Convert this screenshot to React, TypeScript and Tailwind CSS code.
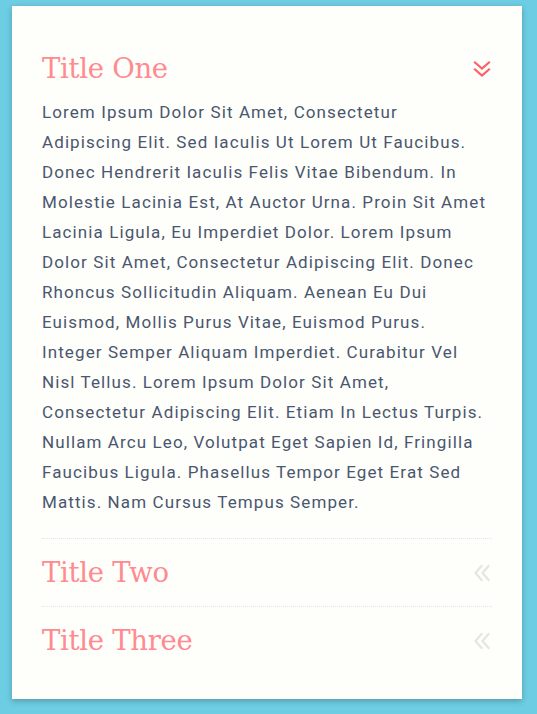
import React, { useState } from 'react';

const body =
    'Lorem Ipsum Dolor Sit Amet, Consectetur Adipiscing Elit. Sed Iaculis Ut Lorem Ut Faucibus. Donec Hendrerit Iaculis Felis Vitae Bibendum. In Molestie Lacinia Est, At Auctor Urna. Proin Sit Amet Lacinia Ligula, Eu Imperdiet Dolor. Lorem Ipsum Dolor Sit Amet, Consectetur Adipiscing Elit. Donec Rhoncus Sollicitudin Aliquam. Aenean Eu Dui Euismod, Mollis Purus Vitae, Euismod Purus. Integer Semper Aliquam Imperdiet. Curabitur Vel Nisl Tellus. Lorem Ipsum Dolor Sit Amet, Consectetur Adipiscing Elit. Etiam In Lectus Turpis. Nullam Arcu Leo, Volutpat Eget Sapien Id, Fringilla Faucibus Ligula. Phasellus Tempor Eget Erat Sed Mattis. Nam Cursus Tempus Semper.';

const Chevrons: React.FC<{ open: boolean }> = ({ open }) => (
    <svg
        width="20"
        height="20"
        viewBox="0 0 20 20"
        fill="none"
        strokeWidth="2.2"
        strokeLinecap="square"
        className={open ? 'stroke-[#ff5e68]' : 'stroke-[#e6e6e1] rotate-90'}
    >
        <path d="M3 3.5l7 6 7-6" />
        <path d="M3 10.5l7 6 7-6" />
    </svg>
);

const App: React.FC = () => {
    const [active, setActive] = useState(0);
    const titles = ['Title One', 'Title Two', 'Title Three'];

    return (
        <div className="min-h-screen bg-[#6dcde3] px-[12px] pt-[6px] pb-[16px] font-['Roboto',sans-serif]">
            <div className="bg-[#fefefa] w-[510px] px-[30px] pt-[38px] pb-[25px] shadow-[0_2px_6px_rgba(0,0,0,0.25)]">
                {titles.map((t, i) => (
                    <div key={t} className={i > 0 ? 'border-t border-dotted border-[#dfe3ea]' : ''}>
                        <button
                            onClick={() => setActive(i)}
                            className={`w-full flex items-center justify-between text-left ${i === 0 ? 'h-[50px]' : 'h-[67px]'}`}
                        >
                            <span className="font-['DejaVu_Serif',serif] text-[27.5px] text-[#ff8a90] tracking-[-0.3px]">
                                {t}
                            </span>
                            <Chevrons open={active === i} />
                        </button>
                        {active === i && (
                            <p className="mt-[3px] mb-[21px] pr-[4px] text-[17px] leading-[30px] tracking-[1.1px] text-[#4a566f]">
                                {body}
                            </p>
                        )}
                    </div>
                ))}
            </div>
        </div>
    );
};

export default App;
